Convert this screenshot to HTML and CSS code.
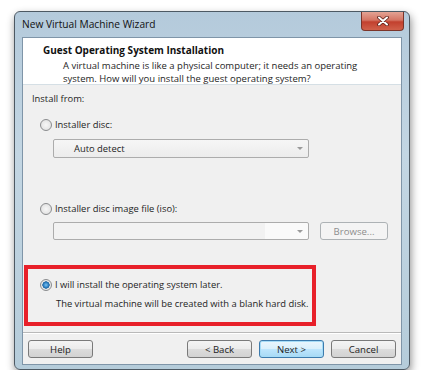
FILE: index.html
```html
<!DOCTYPE html>
<html lang="en">
<head>
  <meta charset="UTF-8">
  <title>New Virtual Machine Wizard</title>
  <link rel="stylesheet" href="styles.css">
</head>
<body>
  <div class="window">
    <div class="titlebar">
      <span class="title">New Virtual Machine Wizard</span>
      <button class="close" type="button">
        <svg width="12" height="10" viewBox="0 0 12 10">
          <path d="M2 1.5 L10 8.5 M10 1.5 L2 8.5" stroke="#5a1f18" stroke-width="3.6" stroke-linecap="round"/>
          <path d="M2 1.5 L10 8.5 M10 1.5 L2 8.5" stroke="#fff" stroke-width="2" stroke-linecap="round"/>
        </svg>
      </button>
    </div>

    <div class="client">
      <div class="header">
        <div class="header-title">Guest Operating System Installation</div>
        <div class="header-desc">A virtual machine is like a physical computer; it needs an operating<br>system. How will you install the guest operating system?</div>
      </div>

      <div class="content">
        <div class="label">Install from:</div>

        <div class="option first">
          <span class="radio"></span>
          <span>Installer disc:</span>
        </div>
        <div class="field-row">
          <div class="combo"><span class="combo-text">Auto detect</span><span class="arrow"></span></div>
        </div>

        <div class="option iso">
          <span class="radio"></span>
          <span>Installer disc image file (iso):</span>
        </div>
        <div class="field-row iso-row">
          <div class="combo small"><span class="combo-text"></span><span class="arrow"></span></div>
          <button class="btn disabled" type="button">Browse...</button>
        </div>

        <div class="highlight">
          <div class="option">
            <span class="radio checked"></span>
            <span>I will install the operating system later.</span>
          </div>
          <div class="note">The virtual machine will be created with a blank hard disk.</div>
        </div>
      </div>

      <div class="footer">
        <button class="btn" type="button">Help</button>
        <div class="spacer"></div>
        <button class="btn" type="button">&lt; Back</button>
        <button class="btn default" type="button">Next &gt;</button>
        <button class="btn" type="button">Cancel</button>
      </div>
    </div>
  </div>
</body>
</html>
```

FILE: styles.css
```css
body {
  margin: 0;
  padding-top: 11px;
  background: #fff;
  font-family: 'Open Sans', 'Noto Sans', sans-serif;
  font-size: 10px;
  color: #1e1e1e;
}

.window {
  width: 380px;
  height: 353px;
  margin-left: 14px;
  padding: 0 7px 4px 7px;
  border: 1px solid #4d5963;
  border-radius: 6px;
  background: linear-gradient(to bottom, #b4cadb 0%, #c3d6e3 40%, #b5ccda 100%);
  box-shadow: 1px 4px 9px rgba(0, 0, 0, 0.45);
  display: flex;
  flex-direction: column;
}

.titlebar {
  flex: none;
  height: 25px;
  display: flex;
  justify-content: space-between;
  align-items: flex-start;
}

.title {
  margin-top: 6px;
  font-size: 10.2px;
  line-height: 13px;
  color: #111;
}

.close {
  width: 43px;
  height: 19px;
  margin-right: -2px;
  padding: 0;
  border: 1px solid #7b3429;
  border-top: none;
  border-radius: 0 0 4px 4px;
  background: linear-gradient(to bottom, #e3a394 0%, #d57564 45%, #c2402e 55%, #d0604a 100%);
  display: flex;
  align-items: center;
  justify-content: center;
}

.client {
  flex: none;
  height: 326px;
  display: flex;
  flex-direction: column;
  border: 1px solid #7f95a8;
  background: #f0f0f0;
}

.header {
  flex: none;
  height: 47px;
  box-sizing: border-box;
  background: #fff;
  border-bottom: 1px solid #d5dfe5;
  padding: 6px 0 0 20px;
}

.header-title {
  font-weight: bold;
  line-height: 13px;
  color: #111;
}

.header-desc {
  margin: 2px 0 0 20px;
  font-size: 9.5px;
  line-height: 13px;
}

.content {
  flex: 1;
  padding: 7px 0 0 9px;
  font-size: 9.4px;
}

.label {
  line-height: 14px;
}

.option {
  display: flex;
  align-items: center;
  gap: 3px;
  line-height: 14px;
  padding-left: 8px;
}

.option.first {
  margin-top: 12px;
}

.option.iso {
  margin-top: 44px;
}

.radio {
  width: 10px;
  height: 10px;
  border: 1px solid #8a8c8e;
  border-radius: 50%;
  background: radial-gradient(circle at 50% 50%, #f7f7f7 0%, #e4e4e4 70%, #d0d0d0 100%);
  flex: none;
}

.radio.checked {
  background: radial-gradient(circle at 50% 50%, #7ec3ef 0%, #2b7fc3 35%, #1b5f98 48%, #e9ebec 55%, #dadada 100%);
}

.field-row {
  display: flex;
  gap: 11px;
  margin: 7px 0 0 21px;
}

.field-row.iso-row {
  margin-top: 6px;
}

.combo {
  width: 254px;
  height: 17px;
  border: 1px solid #acacac;
  border-radius: 2px;
  background: linear-gradient(to bottom, #f6f6f6, #ececec);
  display: flex;
  align-items: center;
  justify-content: space-between;
}

.combo.small {
  height: 16px;
  background: linear-gradient(to right, #f2f2f2 83%, #fafafa 83%);
}

.combo-text {
  padding-left: 20px;
}

.arrow {
  width: 0;
  height: 0;
  border-left: 3px solid transparent;
  border-right: 3px solid transparent;
  border-top: 3px solid #9a9a9a;
  margin-right: 5px;
}

.highlight {
  margin: 25px 0 0 -8px;
  width: 280px;
  height: 44px;
  border: 4px solid #e8202a;
  padding: 9px 0 0 4px;
}

.note {
  margin: 5px 0 0 24px;
  line-height: 14px;
  white-space: nowrap;
}

.footer {
  flex: none;
  height: 32px;
  box-sizing: border-box;
  border-top: 1px solid #b9b9b9;
  box-shadow: inset 0 1px 0 #fff;
  display: flex;
  align-items: flex-start;
  gap: 7px;
  padding: 7px 5px 0 5px;
}

.spacer {
  flex: 1;
}

.btn {
  width: 65px;
  height: 18px;
  padding: 0;
  border: 1px solid #7a7a7a;
  border-radius: 3px;
  background: linear-gradient(to bottom, #f4f4f4 0%, #ebebeb 50%, #dcdcdc 51%, #d2d2d2 100%);
  font-family: 'Open Sans', 'Noto Sans', sans-serif;
  font-size: 9.6px;
  color: #1e1e1e;
}

.btn.default {
  border-color: #3d7bad;
  box-shadow: inset 0 0 0 1px #a6dcf7;
  background: linear-gradient(to bottom, #eaf6fd 0%, #d9f0fc 50%, #bee6fd 51%, #a7d9f5 100%);
}

.btn.disabled {
  width: 68px;
  color: #8d8d8d;
  border-color: #adb2b5;
  background: #f4f4f4;
}
```
